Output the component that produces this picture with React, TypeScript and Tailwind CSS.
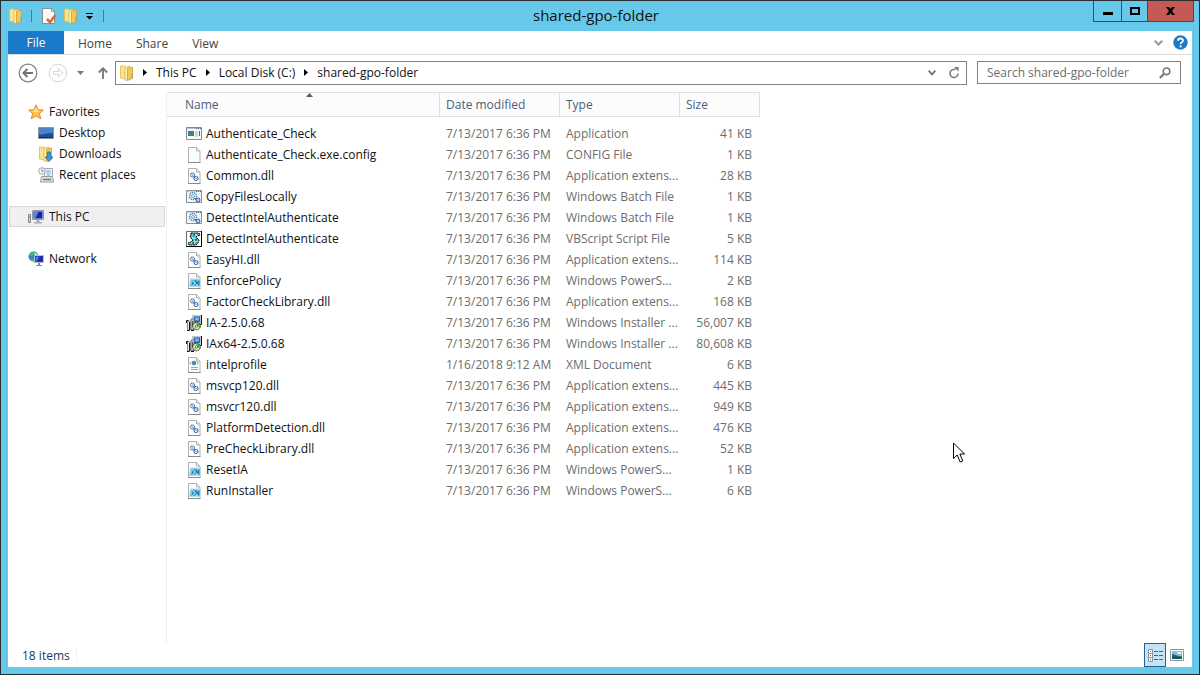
import React from "react";

type Kind =
  | "app"
  | "blank"
  | "dll"
  | "batch"
  | "vbs"
  | "powershell"
  | "installer"
  | "xml";

type FileRow = {
  name: string;
  date: string;
  type: string;
  size: string;
  kind: Kind;
};

const built = "7/13/2017 6:36 PM";

const files: FileRow[] = [
  { name: "Authenticate_Check", date: built, type: "Application", size: "41 KB", kind: "app" },
  { name: "Authenticate_Check.exe.config", date: built, type: "CONFIG File", size: "1 KB", kind: "blank" },
  { name: "Common.dll", date: built, type: "Application extens...", size: "28 KB", kind: "dll" },
  { name: "CopyFilesLocally", date: built, type: "Windows Batch File", size: "1 KB", kind: "batch" },
  { name: "DetectIntelAuthenticate", date: built, type: "Windows Batch File", size: "1 KB", kind: "batch" },
  { name: "DetectIntelAuthenticate", date: built, type: "VBScript Script File", size: "5 KB", kind: "vbs" },
  { name: "EasyHI.dll", date: built, type: "Application extens...", size: "114 KB", kind: "dll" },
  { name: "EnforcePolicy", date: built, type: "Windows PowerS...", size: "2 KB", kind: "powershell" },
  { name: "FactorCheckLibrary.dll", date: built, type: "Application extens...", size: "168 KB", kind: "dll" },
  { name: "IA-2.5.0.68", date: built, type: "Windows Installer ...", size: "56,007 KB", kind: "installer" },
  { name: "IAx64-2.5.0.68", date: built, type: "Windows Installer ...", size: "80,608 KB", kind: "installer" },
  { name: "intelprofile", date: "1/16/2018 9:12 AM", type: "XML Document", size: "6 KB", kind: "xml" },
  { name: "msvcp120.dll", date: built, type: "Application extens...", size: "445 KB", kind: "dll" },
  { name: "msvcr120.dll", date: built, type: "Application extens...", size: "949 KB", kind: "dll" },
  { name: "PlatformDetection.dll", date: built, type: "Application extens...", size: "476 KB", kind: "dll" },
  { name: "PreCheckLibrary.dll", date: built, type: "Application extens...", size: "52 KB", kind: "dll" },
  { name: "ResetIA", date: built, type: "Windows PowerS...", size: "1 KB", kind: "powershell" },
  { name: "RunInstaller", date: built, type: "Windows PowerS...", size: "6 KB", kind: "powershell" },
];

const Icon = ({ children }: { children: React.ReactNode }) => (
  <svg className="size-4 shrink-0" viewBox="0 0 16 16" fill="none" aria-hidden="true">
    {children}
  </svg>
);

const FolderShape = () => (
  <>
    <path d="M1.500 1h4.500l1 1v12l-5.500-1z" fill="#f8e48f" stroke="#e3bd4f" strokeWidth=".8" />
    <path d="M6 2.500 10.500 1v13L6 15.500z" fill="#fdf2b4" stroke="#dfb84a" strokeWidth=".8" />
    <path d="M8.500 3 13.500 2v11.500l-5 2z" fill="#ecca58" stroke="#cda03a" strokeWidth=".8" />
    <path d="M13 9v4" stroke="#5ba7d4" />
  </>
);

const FolderIcon = () => (
  <Icon>
    <FolderShape />
  </Icon>
);

const PropertiesIcon = () => (
  <Icon>
    <path d="M1.500 .5h9l3 3v12h-12z" fill="#fbfbfb" stroke="#8d8d8d" />
    <path d="M10.500 .5v3h3" stroke="#9a9a9a" />
    <path d="m6 11 3 3.200L14.500 7" stroke="#e2673b" strokeWidth="2.600" />
  </Icon>
);

const StarIcon = () => (
  <Icon>
    <path
      d="m8 .8 2.100 4.900 5.300.4-4.100 3.400 1.400 5.300L8 12l-4.700 2.800 1.400-5.300L.6 6.100l5.300-.4z"
      fill="#ffc34a"
      stroke="#e58a2a"
    />
    <path d="m8 3 1.300 3.400 3.200.4L8 8.500 3.500 6.800l3.200-.4z" fill="#ffe391" />
  </Icon>
);

const DesktopIcon = () => (
  <Icon>
    <path d="M.5 2.500h15v11H.5z" fill="#1f4f9b" stroke="#8a93a3" />
    <path d="M1 3h14v5.500C10 6.500 6 11 1 9z" fill="#4c83c8" />
    <path d="M1 12.500h14" stroke="#14305e" />
  </Icon>
);

const DownloadsIcon = () => (
  <Icon>
    <FolderShape />
    <path d="M9.500 6h3v5h2.500l-4 4.500L7 11h2.500z" fill="#3f95dc" stroke="#1c68ad" strokeWidth=".7" />
  </Icon>
);

const RecentIcon = () => (
  <Icon>
    <path d="M6.500 1.500h8v8h-8z" fill="#f0f2f4" stroke="#a3a9af" />
    <path d="M8.500 4h4M8.500 6h2.500M12 6h1M9 8h3" stroke="#5aa4ce" />
    <path d="M3.500 9.500h11l1 5.500h-13z" fill="#dfe2e5" stroke="#959ca3" />
    <path d="M5 12.500h8" stroke="#737b84" strokeWidth="1.500" />
    <circle cx="4" cy="4" r="3.300" fill="#f7f9fb" stroke="#9ca7b0" />
    <path d="M4 2v2.300h1.800" stroke="#426e91" strokeWidth=".8" />
  </Icon>
);

const PcIcon = () => (
  <Icon>
    <path d="M.5 5.500h2v8h-2z" fill="#d7dadd" stroke="#7e858c" />
    <path d="M1 8h1" stroke="#4da04d" />
    <path d="M4.500 1.500h11v9h-11z" fill="#d2d6da" stroke="#959ba1" />
    <path d="M5.500 2.500h9v7h-9z" fill="#1626a8" />
    <path d="M6 3h4.500l-3 6H6z" fill="#5c83e8" />
    <path d="M8.500 11h3v2h-3zM6 13h8v1.500H6z" fill="#a7adb2" />
  </Icon>
);

const NetworkIcon = () => (
  <Icon>
    <circle cx="5.500" cy="5.500" r="5" fill="#2b83d3" />
    <path d="M1 3.500 4 .7l3 .8-2 3-3 .5zM2 7l3 1 1 2.300H4.500z" fill="#4ebd54" />
    <path d="M6 2h2l1.500 2H7z" fill="#c3e9f7" />
    <path d="M6.500 4.500h9v7h-9z" fill="#1a2db4" stroke="#b7c3d2" />
    <path d="M7.500 5.500h4l-2.500 5H7.500z" fill="#4f75dd" />
    <path d="M10 12h2v2h-2zM8 14h6v1H8z" fill="#7892ab" />
  </Icon>
);

const Page = ({ children }: { children?: React.ReactNode }) => (
  <Icon>
    <path d="M2.500 .5h8l3.500 3.500v11.500H2.500z" fill="#fdfdfd" stroke="#b0b0b0" />
    <path d="M10.500 .5V4H14" fill="#ececec" stroke="#b0b0b0" />
    <path d="M2 15.500h12.500" stroke="#8a8a8a" />
    {children}
  </Icon>
);

const FileIcon = ({ kind }: { kind: Kind }) => {
  switch (kind) {
    case "app":
      return (
        <Icon>
          <path d="M.5 1.500h15v12H.5z" fill="#f7f8f9" stroke="#84898f" />
          <path d="M1 2.500h14" stroke="#bdc6ce" />
          <path d="M10 2.500h1M12 2.500h1M14 2.500h1" stroke="#4e6d8e" />
          <path d="M2 5h6v5H2z" fill="#3d8a68" />
          <path d="M2 5h3v2H2z" fill="#3975a8" />
          <path d="M9 6h3M9 8h3M9 10h3" stroke="#a9b2ba" />
          <path d="M13.500 5v5" stroke="#3769a3" />
        </Icon>
      );
    case "blank":
      return <Page />;
    case "dll":
      return (
        <Page>
          <circle cx="6.500" cy="7" r="2" fill="#fff" stroke="#4e82b8" strokeWidth="1.300" strokeDasharray="1.300 .4" />
          <circle cx="6.500" cy="7" r=".6" fill="#315f93" />
          <circle cx="10" cy="10.500" r="2" fill="#fff" stroke="#3568a0" strokeWidth="1.200" strokeDasharray="1.500 .3" />
          <circle cx="10" cy="10.500" r=".6" fill="#315f93" />
          <path d="m7.500 8.500 1.500 1" stroke="#315f93" />
        </Page>
      );
    case "batch":
      return (
        <Icon>
          <path d="M.5 1.500h15v12H.5z" fill="#f4f7fa" stroke="#878f98" />
          <path d="M1 2.500h14" stroke="#cbd2d8" />
          <path d="M10 2.500h1M12 2.500h1M14 2.500h1" stroke="#4e6d8e" />
          <circle cx="7" cy="7" r="3.500" stroke="#4683b8" strokeWidth="1.300" strokeDasharray="1.400 .7" />
          <circle cx="7" cy="7" r="1.500" stroke="#71a2cb" />
          <circle cx="12" cy="11" r="2" fill="#bcd3e8" stroke="#315f93" />
          <path d="m8 9 2.500 2" stroke="#315f93" />
        </Icon>
      );
    case "vbs":
      return (
        <Icon>
          <path d="M.5 .5h15v15H.5z" fill="#fff" stroke="#6c6c6c" />
          <path d="M15.500 0v15.500H0" stroke="#000" />
          <path d="M5 2h8l1 2-3 1-1 1 3 3-1 3-2 2H3l-1-2 3-1 2-2-3-3 1-3z" fill="#3fc4c4" stroke="#000" strokeDasharray="2 .6" />
          <path d="M6.500 4H11M6 6.500l3 1.500M8 10h4M5 12h4" stroke="#e9ffff" />
          <path d="M8 3v2M10 8v2M7 11v2" stroke="#000" />
        </Icon>
      );
    case "powershell":
      return (
        <Page>
          <path d="M4.500 6H14v7.500H3.500z" fill="#7cc6e5" stroke="#b4dcec" />
          <path d="M5.500 12.500 7 7.500h3.500l1 1.500 2-2v5.500z" fill="#1f86bd" />
          <path d="m7 8 2.500 2L6.500 12.500M9.500 12h2.500" stroke="#e9faff" />
        </Page>
      );
    case "installer":
      return (
        <Icon>
          <path d="M6 0h9v9H6z" fill="#c3c7cb" />
          <path d="M15.500 0v9.500H13" stroke="#111" />
          <path d="M8 1.500h6v5.500H8z" fill="#1d62cc" />
          <path d="M9 2.500h4v3H9z" fill="#6db6f5" />
          <path d="M1.500 6h3v9h-3z" fill="#efefef" stroke="#8a8a8a" />
          <path d="M5 4h3v10.500H5z" fill="#cfcfcf" stroke="#777" />
          <path d="M.5 5.500h2M.5 5.500V8M3.500 7v8M1 15.500h2.500M5 15.500h3" stroke="#111" />
          <path d="M6.500 6v5" stroke="#555" />
          <circle cx="10.500" cy="11" r="3.800" fill="#eef08a" stroke="#222" strokeDasharray="2 .5" />
          <path d="M10.500 7.600A3.400 3.400 0 0 1 13.700 12l-3.200-1z" fill="#39aa41" />
          <path d="m10.500 11-3.200 1a3.400 3.400 0 0 0 3.200 2.400z" fill="#7fd3dc" />
          <circle cx="10.500" cy="11" r="1.200" fill="#fff" stroke="#333" strokeWidth=".6" />
        </Icon>
      );
    case "xml":
      return (
        <Page>
          <circle cx="8" cy="6" r="2.200" fill="#3886b8" />
          <path d="M7 5h2v2H7z" fill="#55a35a" />
          <path d="M5 4.500 3.800 6 5 7.500M11 4.500 12.200 6 11 7.500" stroke="#8793a0" />
          <path d="M5 10.500h7M5 12.500h7" stroke="#9aa5b3" />
        </Page>
      );
  }
};

const Caret = () => (
  <svg className="h-[7px] w-1" viewBox="0 0 4 7" aria-hidden="true">
    <path d="M0 0v7l4-3.500z" fill="#000" />
  </svg>
);

const TitleBar = () => (
  <header className="relative flex h-[30px] justify-between">
    <div className="flex items-center pl-[7px]">
      <FolderIcon />
      <span className="ml-[7px] h-3 w-px bg-[#3f7f96]" />
      <button className="ml-[9px]" aria-label="Properties">
        <PropertiesIcon />
      </button>
      <button className="ml-[6px]" aria-label="New folder">
        <FolderIcon />
      </button>
      <button className="ml-[7px]" aria-label="Customize Quick Access Toolbar">
        <svg className="h-[7px] w-[7px]" viewBox="0 0 7 7" aria-hidden="true">
          <path d="M0 0h7v1H0zM0 3h7L3.500 6.500z" fill="#000" />
        </svg>
      </button>
      <span className="ml-[10px] h-3 w-px bg-[#3f7f96]" />
    </div>
    <h1 className="absolute top-1 right-2 left-0 mx-auto w-fit text-[15px] leading-5 text-[#111]">
      shared-gpo-folder
    </h1>
    <div className="mr-[5px] flex h-[21px] border border-t-0 border-[#27556a]">
      <button className="flex w-7 items-center justify-center border-r border-[#27556a]" aria-label="Minimize">
        <span className="mt-1 h-[3px] w-[10px] bg-black" />
      </button>
      <button className="flex w-[26px] items-center justify-center border-r border-[#27556a]" aria-label="Maximize">
        <span className="h-2 w-[10px] border-2 border-black" />
      </button>
      <button className="flex w-[45px] items-center justify-center bg-[#c45a53]" aria-label="Close">
        <svg className="h-2 w-[9px]" viewBox="0 0 9 8" aria-hidden="true">
          <path d="M0 0h3l1.500 2L6 0h3L6 4l3 4H6L4.500 6 3 8H0l3-4z" fill="#000" />
        </svg>
      </button>
    </div>
  </header>
);

const Ribbon = () => (
  <nav className="flex h-6 items-center border-b border-[#dadbdc] text-[#444]">
    <button className="h-full w-14 bg-[#1979ca] text-white">File</button>
    <button className="ml-[14px] pt-[2px]">Home</button>
    <button className="ml-6 pt-[2px]">Share</button>
    <button className="ml-6 pt-[2px]">View</button>
    <button className="ml-auto" aria-label="Expand the Ribbon">
      <svg className="h-[6px] w-[9px]" viewBox="0 0 9 6" fill="none" aria-hidden="true">
        <path d="m.7.700 3.800 3.800L8.300.700" stroke="#999" strokeWidth="2" />
      </svg>
    </button>
    <button className="mr-1 ml-[10px]" aria-label="Help">
      <svg className="size-[15px]" viewBox="0 0 15 15" fill="none" aria-hidden="true">
        <circle cx="7.500" cy="7.500" r="7.200" fill="#1979ca" />
        <path d="M5 5.700C5 2.800 10 2.800 10 5.600c0 1.700-2.400 1.700-2.400 3.400" stroke="#fff" strokeWidth="1.800" />
        <path d="M6.600 10.300h2v2h-2z" fill="#fff" />
      </svg>
    </button>
  </nav>
);

const AddressBar = () => (
  <div className="flex h-[37px] items-center pr-[11px] pb-[2px] pl-[10px]">
    <button aria-label="Back">
      <svg className="size-5" viewBox="0 0 20 20" fill="none" aria-hidden="true">
        <circle cx="10" cy="10" r="8.800" stroke="#858585" strokeWidth="1.300" />
        <path d="M15 10H6M9.500 6 5.500 10l4 4" stroke="#757575" strokeWidth="2" />
      </svg>
    </button>
    <button className="ml-[10px]" aria-label="Forward" disabled>
      <svg className="size-5" viewBox="0 0 20 20" fill="none" aria-hidden="true">
        <circle cx="10" cy="10" r="8.800" stroke="#d5d5d5" />
        <path d="M5.500 8.500h5V6l4.500 4-4.500 4v-2.500h-5z" stroke="#d5d5d5" />
      </svg>
    </button>
    <button className="ml-[9px]" aria-label="Recent locations">
      <svg className="h-1 w-[7px]" viewBox="0 0 7 4" aria-hidden="true">
        <path d="M0 0h7L3.500 4z" fill="#777" />
      </svg>
    </button>
    <button className="ml-[14px]" aria-label="Up">
      <svg className="h-3 w-[10px]" viewBox="0 0 10 12" fill="none" aria-hidden="true">
        <path d="M5 12V1.500M.8 5.500 5 1.300l4.200 4.200" stroke="#777" strokeWidth="1.800" />
      </svg>
    </button>
    <div className="ml-[7px] flex h-6 grow items-center border border-[#7f7f7f] pr-[6px] pl-[3px] text-[#111]">
      <FolderIcon />
      <span className="ml-2 flex items-center gap-[9px]">
        <Caret />
        <button>This PC</button>
        <Caret />
        <button>Local Disk (C:)</button>
        <Caret />
        <button>shared-gpo-folder</button>
      </span>
      <button className="ml-auto" aria-label="Previous locations">
        <svg className="h-[6px] w-2" viewBox="0 0 8 6" fill="none" aria-hidden="true">
          <path d="m.7.700 3.300 3.800L7.300.700" stroke="#6d6d6d" strokeWidth="1.800" />
        </svg>
      </button>
      <button className="ml-3" aria-label="Refresh">
        <svg className="size-3" viewBox="0 0 12 12" fill="none" aria-hidden="true">
          <path d="M7.500 2.500H5.700a4 4 0 1 0 4.300 4" stroke="#777" strokeWidth="1.600" />
          <path d="M6 0h4.500v4.500z" fill="#777" />
        </svg>
      </button>
    </div>
    <label className="ml-[10px] flex h-[23px] w-[204px] items-center border border-[#7f7f7f] px-[9px]">
      <input
        type="search"
        aria-label="Search shared-gpo-folder"
        placeholder="Search shared-gpo-folder"
        className="min-w-0 grow outline-none placeholder:text-[#6d6d6d]"
      />
      <svg className="size-3 shrink-0" viewBox="0 0 12 12" fill="none" aria-hidden="true">
        <circle cx="7.500" cy="4.300" r="3.300" stroke="#777" strokeWidth="1.600" />
        <path d="M5 6.800 .8 11" stroke="#777" strokeWidth="2" />
      </svg>
    </label>
  </div>
);

const SideLink = ({
  icon,
  label,
  className,
}: {
  icon: React.ReactNode;
  label: string;
  className?: string;
}) => (
  <a href="#" className={`flex h-[21px] items-center gap-[5px] ${className ?? ""}`}>
    {icon}
    {label}
  </a>
);

const Sidebar = () => (
  <aside className="w-[159px] shrink-0 border-r border-[#f0f0f0] pt-[9px] text-[#111]">
    <SideLink className="pl-5" icon={<StarIcon />} label="Favorites" />
    <SideLink className="pl-[30px]" icon={<DesktopIcon />} label="Desktop" />
    <SideLink className="pl-[30px]" icon={<DownloadsIcon />} label="Downloads" />
    <SideLink className="pl-[30px]" icon={<RecentIcon />} label="Recent places" />
    <SideLink
      className="mt-[21px] mr-px ml-px border border-[#d9d9d9] bg-[#f0f0f0] pl-[18px]"
      icon={<PcIcon />}
      label="This PC"
    />
    <SideLink className="mt-[21px] pl-5" icon={<NetworkIcon />} label="Network" />
  </aside>
);

const FileTable = () => (
  <table className="w-[593px] table-fixed border-separate border-spacing-0 self-start text-left">
    <colgroup>
      <col className="w-[273px]" />
      <col className="w-[120px]" />
      <col className="w-[120px]" />
      <col className="w-20" />
    </colgroup>
    <thead>
      <tr className="h-[25px] bg-[#fcfcfc] text-[#4c607a]">
        <th className="relative border border-l-0 border-[#e0e0e0] pl-[18px] font-normal">
          Name
          <svg className="absolute top-0 left-[139px] h-1 w-[7px]" viewBox="0 0 7 4" aria-hidden="true">
            <path d="M0 4h7L3.500 0z" fill="#4c607a" />
          </svg>
        </th>
        <th className="border border-l-0 border-[#e0e0e0] pl-[6px] font-normal">Date modified</th>
        <th className="border border-l-0 border-[#e0e0e0] pl-[6px] font-normal">Type</th>
        <th className="border border-l-0 border-[#e0e0e0] pl-[6px] font-normal">Size</th>
      </tr>
      <tr className="h-[6px]" />
    </thead>
    <tbody className="text-[#6d6d6d]">
      {files.map((file, i) => (
        <tr key={i} className="h-[21px] whitespace-nowrap">
          <td className="pl-[19px] text-[#111]">
            <span className="flex items-center gap-1">
              <FileIcon kind={file.kind} />
              {file.name}
            </span>
          </td>
          <td className="pl-[6px]">{file.date}</td>
          <td className="pl-[6px]">{file.type}</td>
          <td className="pr-2 text-right">{file.size}</td>
        </tr>
      ))}
    </tbody>
  </table>
);

const StatusBar = () => (
  <footer className="flex h-6 items-center pl-[14px] text-[#1e395b]">
    <span className="border-r border-[#f0f0f0] pt-[2px] pr-[6px] leading-3">{files.length} items</span>
    <button
      className="ml-auto flex h-6 w-[22px] items-center justify-center border border-[#26648f] bg-[#c5e2f6]"
      aria-label="Details view"
    >
      <svg className="h-[13px] w-[15px]" viewBox="0 0 15 13" fill="none" aria-hidden="true">
        <path d="M.5 .5h4v4h-4zM.5 4.500h4v4h-4zM.5 8.500h4v4h-4z" fill="#fff" stroke="#8b9298" />
        <path d="M2 2h1v1H2z" fill="#3a9148" />
        <path d="M2 6h1v1H2z" fill="#c43434" />
        <path d="M2 10h1v1H2z" fill="#3058b0" />
        <path d="M6 2.500h4M11 2.500h4M6 6.500h4M11 6.500h4M6 10.500h4M11 10.500h4" stroke="#4d6376" />
      </svg>
    </button>
    <button className="mr-2 ml-1" aria-label="Large icons view">
      <svg className="h-3 w-[14px]" viewBox="0 0 14 12" aria-hidden="true">
        <path d="M.5 .5h13v11H.5z" fill="#fff" stroke="#8d9399" />
        <path d="M2 2h10v8H2z" fill="#84bddf" />
        <path d="M2 5c3 0 5 3 10 2v3H2z" fill="#26754f" />
        <path d="M2 8c4-1 7 0 10 1v1H2z" fill="#174d78" />
        <path d="M7 3h4v2H8z" fill="#e5f6fb" />
      </svg>
    </button>
  </footer>
);

const App = () => {
  return (
    <div className="relative flex min-h-screen flex-col border border-[#2b2d30] bg-[#66c9e9] font-['Open_Sans','Noto_Sans',sans-serif] text-xs leading-4">
      <TitleBar />
      <div className="mx-[7px] mb-[7px] flex grow flex-col bg-white">
        <Ribbon />
        <AddressBar />
        <main className="flex grow">
          <Sidebar />
          <FileTable />
        </main>
        <StatusBar />
      </div>
      {/* mouse pointer */}
      <svg
        className="pointer-events-none absolute top-[441px] left-[952px] h-[21px] w-3"
        viewBox="0 0 12 21"
        aria-hidden="true"
      >
        <path
          d="M.5 1v15.500L4.200 13l3 7 2.600-1.100-3-6.900h4.700z"
          fill="#fff"
          stroke="#000"
        />
      </svg>
    </div>
  );
};

export default App;
